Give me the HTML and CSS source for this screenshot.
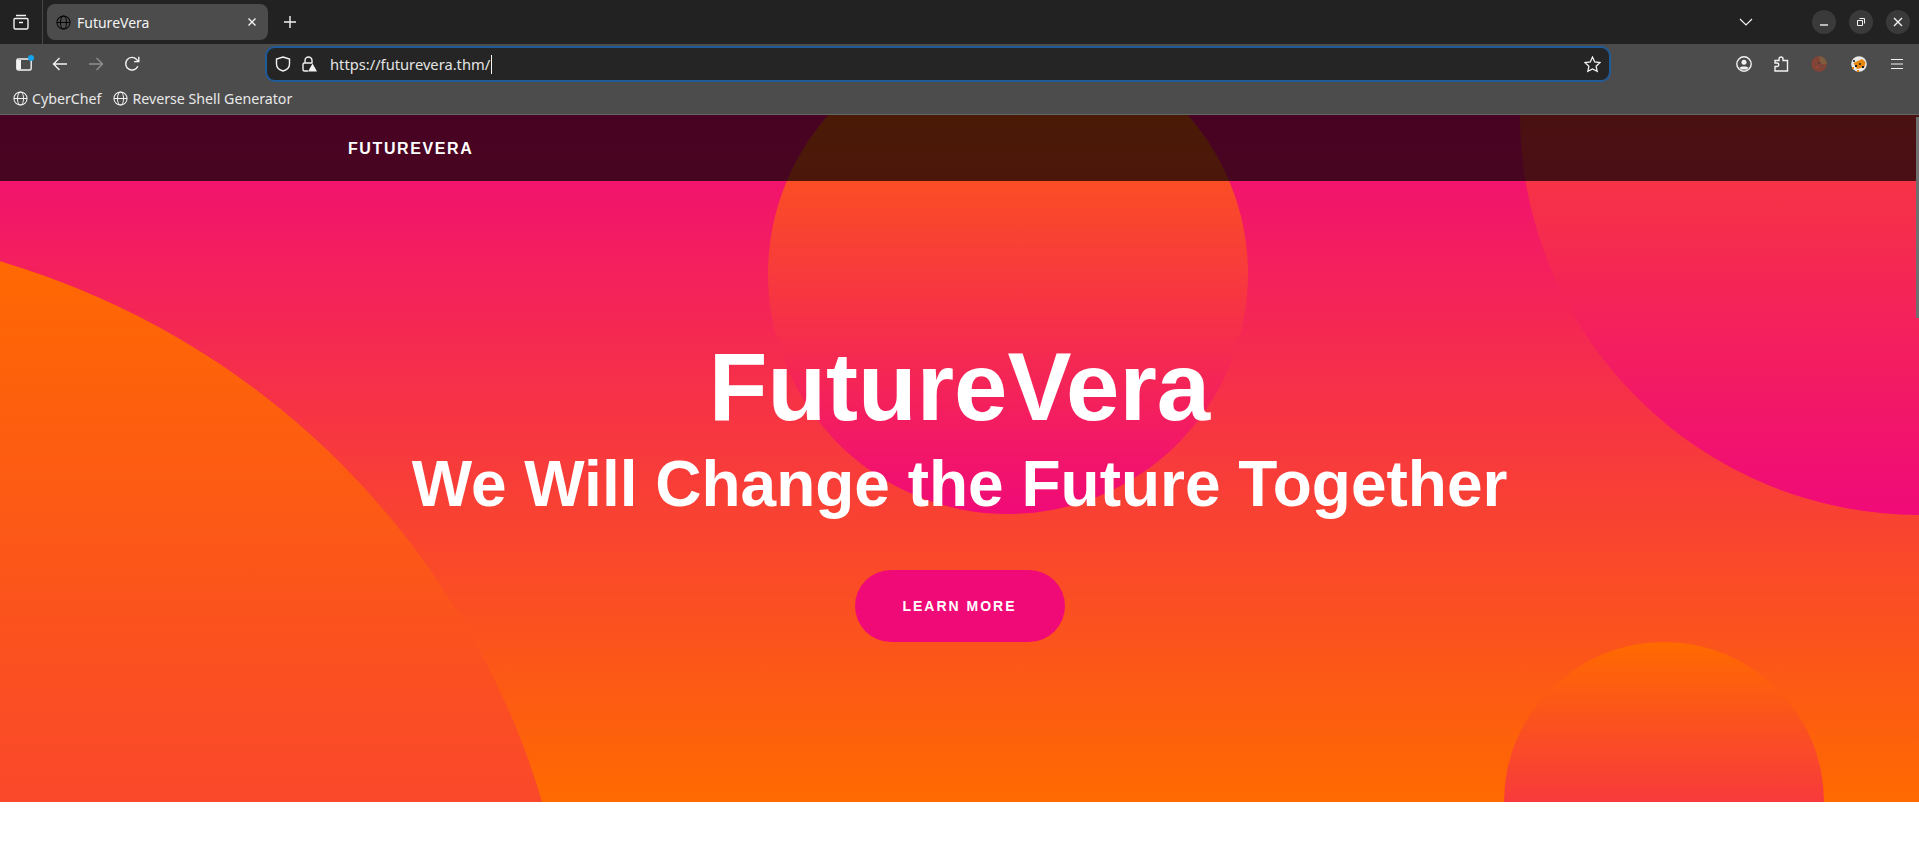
FILE: index.html
```html
<!DOCTYPE html>
<html lang="en">
<head>
  <meta charset="UTF-8" />
  <title>FutureVera</title>
  <link rel="stylesheet" href="styles.css">
</head>
<body>

  <!-- Browser tab strip -->
  <div class="tabstrip">
    <div class="tab-views">
      <svg class="ico" viewBox="0 0 16 16"><path d="M3 1.500h10M1.800 4.500h12.400M1 6v7.500a1.500 1.500 0 0 0 1.500 1.500h11a1.500 1.500 0 0 0 1.500-1.500V6a1.500 1.500 0 0 0-1-1.500H2A1.500 1.500 0 0 0 1 6zM6 8.500h4"/></svg>
    </div>
    <div class="tab">
      <svg class="ico globe dark" viewBox="0 0 16 16"><circle cx="8" cy="8" r="7"/><ellipse cx="8" cy="8" rx="3.200" ry="7"/><path d="M1 8h14"/></svg>
      <span class="tab-title">FutureVera</span>
      <svg class="ico tab-close" viewBox="0 0 10 10"><path d="M1.500 1.500l7 7M8.500 1.500l-7 7"/></svg>
    </div>
    <svg class="ico new-tab" viewBox="0 0 14 14"><path d="M7 1v12M1 7h12"/></svg>
    <svg class="ico tab-list" viewBox="0 0 14 8"><path d="M1 1l6 6 6-6"/></svg>
    <div class="win-btns">
      <button class="win-btn"><svg class="ico" viewBox="0 0 10 10"><path d="M1 8h8"/></svg></button>
      <button class="win-btn"><svg class="ico thin" viewBox="0 0 10 10"><path d="M1.500 3.500h5V8.500h-5zM3.500 1.500h5v5"/></svg></button>
      <button class="win-btn"><svg class="ico" viewBox="0 0 10 10"><path d="M1 1l8 8M9 1l-8 8"/></svg></button>
    </div>
  </div>

  <!-- Navigation toolbar -->
  <div class="toolbar">
    <div class="nav-row">
      <span class="sidebar-btn">
        <svg class="ico" viewBox="0 0 16 14"><rect x="0.800" y="2" width="14.400" height="11" rx="1.500"/><path class="fill" d="M1 3h4v9.500H1z"/></svg>
        <span class="dot"></span>
      </span>
      <svg class="ico nav-back" viewBox="0 0 16 16"><path d="M15 8H1.500M7.500 2l-6 6 6 6"/></svg>
      <svg class="ico nav-forward" viewBox="0 0 16 16"><path d="M1 8h13.500M8.500 2l6 6-6 6"/></svg>
      <svg class="ico nav-reload" viewBox="0 0 16 16"><path d="M13.800 10.200A6.300 6.300 0 1 1 12.600 3.400L14.600 5.400M14.800 0.800v4.800H10"/></svg>
      <div class="urlbar">
        <svg class="ico shield" viewBox="0 0 16 16"><path d="M8 1l6.500 2v5c0 3.500-3 6-6.500 7-3.500-1-6.500-3.500-6.500-7V3z"/></svg>
        <span class="lock">
          <svg class="ico" viewBox="0 0 16 16"><path d="M4 7V4.500a3.500 3.500 0 0 1 7 0V7M7 15H3.500A1.500 1.500 0 0 1 2 13.500V8.500A1.500 1.500 0 0 1 3.500 7h8"/><path class="fill" d="M11.500 7.500l4.500 8H7z"/></svg>
        </span>
        <span class="url">https://futurevera.thm/</span>
        <span class="caret"></span>
        <svg class="ico star" viewBox="0 0 16 16"><path d="M8 1l2.100 4.600 5 .6-3.700 3.400 1 4.900L8 12.100l-4.400 2.400 1-4.900L.9 6.200l5-.6z"/></svg>
      </div>
      <svg class="ico profile" viewBox="0 0 16 16"><circle cx="8" cy="8" r="7.200"/><circle class="fill" cx="8" cy="6.300" r="2.500"/><path class="fill" d="M3.500 11.500C5 10 11 10 12.500 11.500L11 13.500H5z"/></svg>
      <svg class="ico puzzle" viewBox="0 0 16 16"><path d="M2 15V10.500h2a1.500 1.500 0 0 0 0-3.500H2V4.500h4V3a2 2 0 0 1 4 0v1.500h4.500V15z"/></svg>
      <svg class="ext ext-one" viewBox="0 0 16 16"><circle cx="8" cy="8" r="7.800" fill="#8a4436"/><path d="M8 .2a7.800 7.800 0 0 1 7.800 7.800H11L9 5z" fill="#85613e"/><rect x="7" y="6" width="2" height="2" fill="#5a3f35"/><rect x="10" y="9" width="2" height="2" fill="#6b4c3a"/><rect x="5" y="10" width="2" height="2" fill="#a34a3c"/></svg>
      <svg class="ext ext-two" viewBox="0 0 16 16"><circle cx="8" cy="8" r="7.800" fill="#e9e9e9"/><path d="M2.500 7l8.500-4 3.500 3-1 5-7.500 2z" fill="#e8860c"/><rect x="4" y="9" width="2" height="2" fill="#222"/><rect x="8" y="7" width="2" height="2" fill="#5d3a10"/><rect x="11" y="10" width="2" height="2" fill="#222"/><rect x="6" y="14" width="2" height="2" fill="#e8860c"/><rect x="2" y="4" width="2" height="2" fill="#444"/><rect x="1" y="11" width="2" height="2" fill="#e8860c"/></svg>
      <svg class="ico menu" viewBox="0 0 14 12"><path d="M1 1.500h12M1 6h12M1 10.500h12"/></svg>
    </div>
    <div class="bookmarks">
      <a class="bookmark">
        <svg class="ico globe" viewBox="0 0 16 16"><circle cx="8" cy="8" r="7"/><ellipse cx="8" cy="8" rx="3.200" ry="7"/><path d="M1 8h14"/></svg>
        CyberChef
      </a>
      <a class="bookmark">
        <svg class="ico globe" viewBox="0 0 16 16"><circle cx="8" cy="8" r="7"/><ellipse cx="8" cy="8" rx="3.200" ry="7"/><path d="M1 8h14"/></svg>
        Reverse Shell Generator
      </a>
    </div>
  </div>

  <!-- Site -->
  <main class="hero">
    <span class="circle circle-left"></span>
    <span class="circle circle-top"></span>
    <span class="circle circle-right"></span>
    <span class="circle circle-bottom"></span>

    <header class="site-header">
      <a class="brand">FUTUREVERA</a>
    </header>

    <div class="hero-content">
      <h1>FutureVera</h1>
      <h2>We Will Change the Future Together</h2>
      <a class="btn">LEARN MORE</a>
    </div>

    <span class="scroll-thumb"></span>
  </main>

</body>
</html>
```

FILE: styles.css
```css
:root {
  --pink: #f00a78;
  --orange: #ff6a00;
}

* {
  box-sizing: border-box;
}

html, body {
  height: 100%;
}

body {
  margin: 0;
  overflow: hidden;
  background-color: #fff;
  font-family: "Noto Sans", sans-serif;
}

/* icons */
.ico {
  display: block;
  flex: none;
  width: 16px;
  height: 16px;
  fill: none;
  stroke: #f2f2f2;
  stroke-width: 1.4;
}

.ico .fill {
  fill: #f2f2f2;
  stroke: none;
}

/* tab strip */
.tabstrip {
  display: flex;
  align-items: center;
  height: 44px;
  background-color: #222;
}

.tab-views {
  display: flex;
  align-items: center;
  justify-content: center;
  width: 43px;
  height: 44px;
  border-right: 1px solid #474747;
}

.tab {
  display: flex;
  align-items: center;
  width: 221px;
  height: 36px;
  margin-left: 4px;
  padding: 0 11px 0 9px;
  border-radius: 8px;
  background-color: #4c4c4c;
  color: #f4f4f4;
  font-size: 14px;
}

.tab-title {
  flex: 1;
  margin-left: 6px;
}

.globe {
  width: 15px;
  height: 15px;
  stroke-width: 1.1;
}

.globe.dark {
  stroke: #050505;
}

.tab-close {
  width: 10px;
  height: 10px;
}

.new-tab {
  width: 14px;
  height: 14px;
  margin-left: 15px;
}

.tab-list {
  width: 14px;
  height: 8px;
  margin-left: auto;
  stroke-width: 1.2;
}

.win-btns {
  display: flex;
  gap: 13px;
  margin-left: 59px;
  margin-right: 9px;
}

.win-btn {
  display: flex;
  align-items: center;
  justify-content: center;
  width: 24px;
  height: 24px;
  padding: 0;
  border: none;
  border-radius: 50%;
  background-color: #3a3a3a;
}

.win-btn .ico {
  width: 10px;
  height: 10px;
}

.win-btn .thin {
  stroke-width: 1;
}

/* toolbar */
.toolbar {
  height: 71px;
  border-bottom: 1px solid #666;
  background-color: #4c4c4c;
}

.nav-row {
  display: flex;
  align-items: center;
  height: 40px;
}

.sidebar-btn {
  position: relative;
  margin-left: 16px;
}

.dot {
  position: absolute;
  top: -1px;
  right: -2px;
  width: 6px;
  height: 6px;
  border-radius: 50%;
  background-color: #13a5f0;
}

.nav-back {
  margin-left: 20px;
}

.nav-forward {
  margin-left: 20px;
  opacity: 0.4;
}

.nav-reload {
  margin-left: 20px;
}

.urlbar {
  display: flex;
  align-items: center;
  width: 1346px;
  height: 36px;
  margin-left: 125px;
  padding: 0 8px 0 8px;
  border: 2px solid #1f5a99;
  border-radius: 10px;
  background-color: #252525;
}

.lock .ico,
.lock {
  display: block;
}

.lock {
  margin-left: 10px;
}

.url {
  margin-left: 13px;
  color: #e4e4e4;
  font-size: 14.700px;
}

.caret {
  width: 1px;
  height: 19px;
  margin-left: 1px;
  background-color: #f4f4f4;
}

.star {
  width: 17px;
  height: 17px;
  margin-left: auto;
  stroke-width: 1.2;
}

.profile {
  margin-left: 125px;
}

.puzzle {
  margin-left: 21px;
}

.ext {
  flex: none;
  width: 16px;
  height: 16px;
}

.ext-one {
  margin-left: 22px;
  opacity: 0.9;
}

.ext-two {
  margin-left: 24px;
}

.menu {
  width: 14px;
  height: 12px;
  margin-left: 23px;
  stroke-width: 1.2;
}

.bookmarks {
  display: flex;
  align-items: center;
  gap: 12px;
  height: 30px;
  padding: 0 0 1px 13px;
}

.bookmark {
  display: flex;
  align-items: center;
  gap: 4px;
  color: #e8e8e8;
  font-size: 14.200px;
}

/* site */
.hero {
  position: relative;
  height: 687px;
  overflow: hidden;
  background: linear-gradient(var(--pink), var(--orange));
}

.circle {
  position: absolute;
  border-radius: 50%;
  background: linear-gradient(var(--orange), var(--pink));
}

.circle-left {
  left: -1025px;
  bottom: -1027px;
  width: 1600px;
  height: 1600px;
}

.circle-top {
  top: -81px;
  left: 768px;
  width: 480px;
  height: 480px;
}

.circle-right {
  top: -400px;
  right: -401px;
  width: 800px;
  height: 800px;
}

.circle-bottom {
  right: 95px;
  bottom: -160px;
  width: 320px;
  height: 320px;
}

.site-header {
  position: relative;
  height: 66px;
  padding-left: 348px;
  background-color: rgba(0, 0, 0, 0.7);
  line-height: 66px;
}

.brand {
  color: #fff;
  font-family: "Liberation Sans", Arial, sans-serif;
  font-size: 16px;
  font-weight: 700;
  letter-spacing: 1.600px;
}

.hero-content {
  position: relative;
  display: flex;
  flex-direction: column;
  align-items: center;
  padding-top: 153px;
  color: #fff;
  font-family: "Liberation Sans", Arial, sans-serif;
  text-align: center;
}

h1 {
  margin: 0;
  font-size: 96px;
  line-height: 106px;
}

h2 {
  margin: 9px 0 0;
  font-size: 64px;
  line-height: 70px;
}

.btn {
  display: flex;
  align-items: center;
  justify-content: center;
  width: 210px;
  height: 72px;
  margin-top: 51px;
  border-radius: 36px;
  background-color: var(--pink);
  color: #fff;
  font-size: 14px;
  font-weight: 700;
  letter-spacing: 2px;
}

.scroll-thumb {
  position: absolute;
  top: 2px;
  right: 0;
  width: 3px;
  height: 201px;
  background-color: #6f6f6f;
}
```
